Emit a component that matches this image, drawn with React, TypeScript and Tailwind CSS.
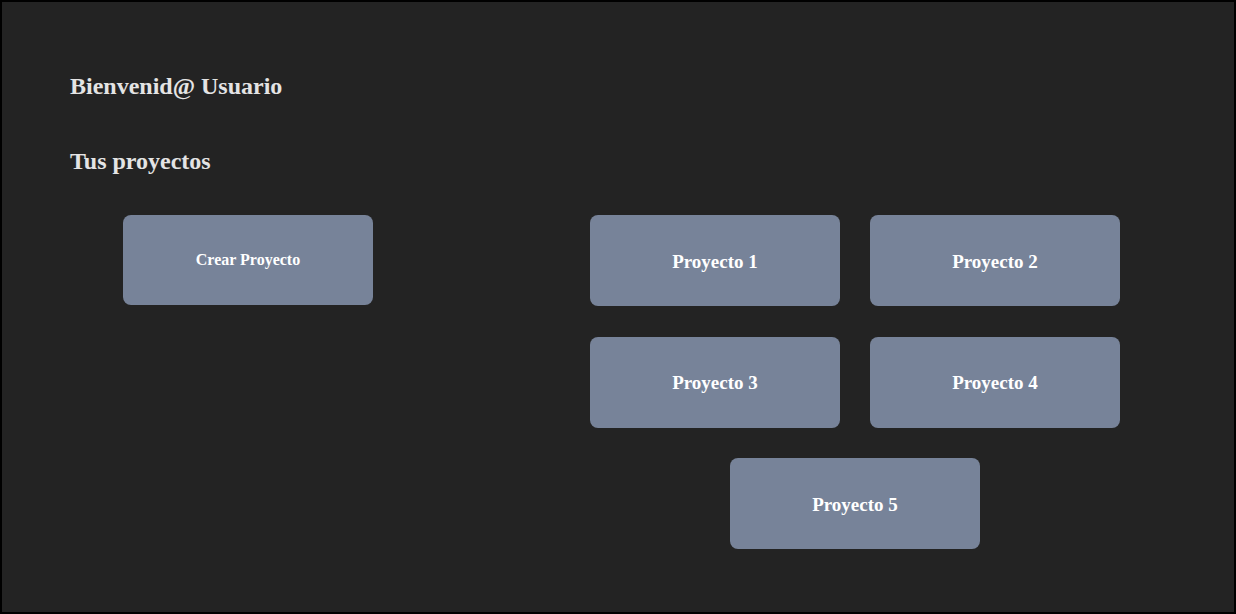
const proyectos = ["Proyecto 1", "Proyecto 2", "Proyecto 3", "Proyecto 4", "Proyecto 5"];

function Card({ label, small }: { label: string; small?: boolean }) {
  return (
    <button
      type="button"
      className={
        "flex w-[250px] items-center justify-center rounded-lg bg-[#778399] font-bold text-white " +
        (small ? "h-[90px] text-[16px]" : "h-[91px] pt-[3px] text-[19px]")
      }
    >
      {label}
    </button>
  );
}

export default function App() {
  return (
    <div
      className="h-[614px] w-[1236px] border-2 border-black bg-[#232323] text-[#e4e4e4]"
      style={{ fontFamily: '"Liberation Serif", serif' }}
    >
      <div className="px-[68px] pt-[70px]">
        <h2 className="text-[24px] font-bold leading-[28px]">Bienvenid@ Usuario</h2>
        <h2 className="mt-[47px] text-[24px] font-bold leading-[28px]">Tus proyectos</h2>
      </div>
      <div className="mt-[40px] flex items-start">
        <div className="ml-[121px]">
          <Card label="Crear Proyecto" small />
        </div>
        <div className="ml-[217px] flex w-[530px] flex-wrap justify-center gap-x-[30px] gap-y-[30.5px]">
          {proyectos.map((p) => (
            <Card key={p} label={p} />
          ))}
        </div>
      </div>
    </div>
  );
}
